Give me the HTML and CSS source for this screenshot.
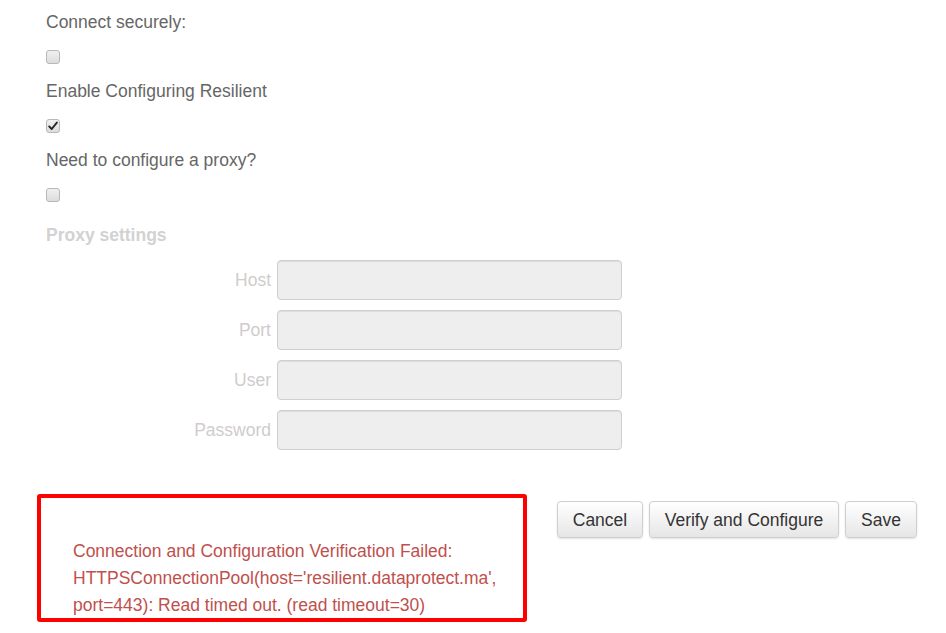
FILE: index.html
```html
<!DOCTYPE html>
<html>
<head>
<meta charset="utf-8">
<link rel="stylesheet" href="styles.css">
</head>
<body>
<div class="page">
  <div class="form">
    <div class="row label">Connect securely:</div>
    <div class="row"><span class="cb"></span></div>
    <div class="row label">Enable Configuring Resilient</div>
    <div class="row"><span class="cb checked"><svg viewBox="0 0 14 14" width="12" height="12"><path d="M2.5 7.5 L5.5 10.5 L11.5 3" fill="none" stroke="#222" stroke-width="2.2" stroke-linecap="round" stroke-linejoin="round"/></svg></span></div>
    <div class="row label">Need to configure a proxy?</div>
    <div class="row"><span class="cb"></span></div>
    <div class="section">Proxy settings</div>
    <div class="fields">
      <div class="field"><span class="flabel">Host</span><span class="input"></span></div>
      <div class="field"><span class="flabel">Port</span><span class="input"></span></div>
      <div class="field"><span class="flabel">User</span><span class="input"></span></div>
      <div class="field"><span class="flabel">Password</span><span class="input"></span></div>
    </div>
  </div>
  <div class="bottom">
    <div class="error">Connection and Configuration Verification Failed:<br>HTTPSConnectionPool(host='resilient.dataprotect.ma',<br>port=443): Read timed out. (read timeout=30)</div>
    <div class="buttons">
      <button class="btn btn-cancel">Cancel</button>
      <button class="btn btn-verify">Verify and Configure</button>
      <button class="btn btn-save">Save</button>
    </div>
  </div>
</div>
</body>
</html>
```
FILE: styles.css
```css
html, body {
  margin: 0;
  padding: 0;
  background: #fff;
}
body {
  font-family: "Liberation Sans", Arial, sans-serif;
  font-size: 17.5px;
  color: #666;
  width: 946px;
  height: 633px;
  overflow: hidden;
}
.page {
  padding-top: 5px;
}
.form {
  padding-left: 46px;
}
.row {
  height: 34.5px;
  display: flex;
  align-items: center;
}
.label {
  color: #666;
  padding-top: 1px;
  box-sizing: border-box;
}
.cb {
  display: inline-flex;
  align-items: center;
  justify-content: center;
  width: 12px;
  height: 12px;
  border: 1px solid #b8b8b8;
  border-radius: 3px;
  background: linear-gradient(#f0f0f0, #dcdcdc);
  margin-top: 1px;
}
.section {
  height: 46px;
  display: flex;
  align-items: center;
  font-weight: bold;
  color: #d2d2d2;
}
.fields {
  display: flex;
  flex-direction: column;
  gap: 10px;
  margin-top: 2px;
}
.field {
  display: flex;
  align-items: center;
  height: 40px;
}
.flabel {
  width: 225px;
  text-align: right;
  color: #d0cccc;
  padding-right: 6px;
}
.input {
  box-sizing: border-box;
  width: 345px;
  height: 40px;
  background: #eeeeee;
  border: 1px solid #cfcfcf;
  border-radius: 4px;
  box-shadow: inset 0 1px 1px rgba(0,0,0,0.075);
}
.bottom {
  display: flex;
  align-items: flex-start;
  margin-top: 44px;
  padding-left: 37px;
}
.error {
  box-sizing: border-box;
  width: 490px;
  height: 128px;
  border: 4px solid #ff0000;
  border-radius: 3px;
  padding: 40px 0 0 32px;
  color: #c0504d;
  line-height: 27px;
  font-size: 17.5px;
  white-space: nowrap;
  overflow: hidden;
}
.buttons {
  display: flex;
  gap: 6px;
  margin-left: 30px;
  margin-top: 7px;
}
.btn {
  font-family: "Liberation Sans", Arial, sans-serif;
  font-size: 17.5px;
  color: #333;
  height: 37px;
  padding: 1px 10px 0;
  border: 1px solid #cfcfcf;
  border-radius: 4px;
  background: linear-gradient(#ffffff, #e6e6e6);
  box-shadow: 0 1px 2px rgba(0,0,0,0.12);
}
.btn-cancel { width: 86px; }
.btn-verify { width: 190px; }
.btn-save { width: 72px; }
```
